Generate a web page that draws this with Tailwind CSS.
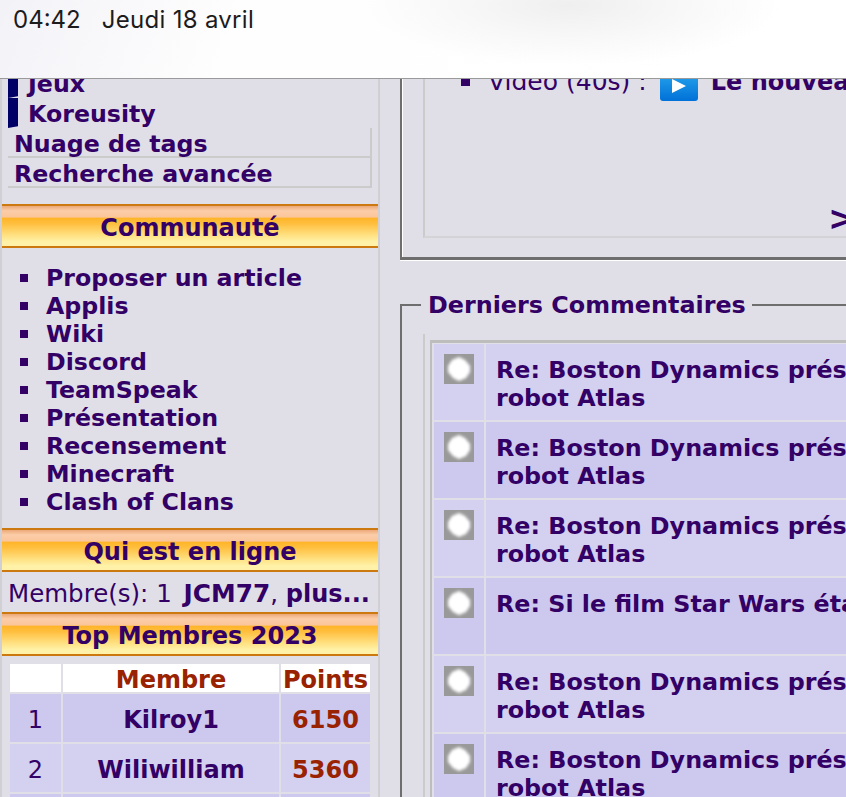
<!DOCTYPE html>
<html lang="fr">
<head>
<meta charset="utf-8">
<script src="https://cdn.jsdelivr.net/npm/@tailwindcss/browser@4"></script>
</head>
<body class="m-0">
<svg width="0" height="0" class="absolute"><defs><filter id="soft" x="-30%" y="-30%" width="160%" height="160%"><feGaussianBlur stdDeviation="1.6"/></filter>
<symbol id="dot" viewBox="0 0 30 30"><rect width="30" height="30" fill="#999"/><path d="M15 3L21 6L26 12L26 18L22 24L15 27L9 24L4 18L4 12L8 6Z" fill="#fff" filter="url(#soft)"/></symbol></defs></svg>
<div class="relative w-[846px] h-[797px] overflow-hidden bg-[#e0dfe8] text-[#330066] font-['DejaVu_Sans',sans-serif] text-[24px] leading-[28px] whitespace-nowrap">

  <div class="absolute z-10 top-0 left-0 w-full h-[79px] border-b border-[#9a9a9a] bg-[radial-gradient(ellipse_210px_60px_at_570px_5px,#efefef_0%,#f8f8f8_55%,#ffffff00_100%),linear-gradient(110deg,#f3f2f7_0%,#fefefe_28%,#ffffff_100%)] font-['Inter',sans-serif] text-[24px] leading-[28px] text-[#1c1c1e] flex gap-[21px] pl-[13px] pt-[6px]">
    <span>04:42</span><span class="tracking-[0.3px]">Jeudi 18 avril</span>
  </div>

  <div class="flex h-full">
    <aside class="w-[380px] shrink-0 h-full border-l-2 border-r-2 border-[#cfcfd4] pt-[68px] font-bold overflow-hidden">
      <div class="ml-[6px] flex h-[30px] leading-[32px] text-[23.7px]"><span class="w-[10px] h-[30px] bg-[#000066] [clip-path:polygon(0_0,100%_0,100%_94%,0_100%)]"></span><span class="ml-[10px]">Jeux</span></div>
      <div class="ml-[6px] flex h-[30px] leading-[32px] text-[23.7px]"><span class="w-[10px] h-[30px] bg-[#000066] [clip-path:polygon(0_0,100%_0,100%_94%,0_100%)]"></span><span class="ml-[10px]">Koreusity</span></div>
      <div class="ml-[6px] w-[364px] h-[30px] leading-[32px] text-[23.7px] pl-[6px] border-r-2 border-b-2 border-[#cbcbcb]">Nuage de tags</div>
      <div class="ml-[6px] w-[364px] h-[30px] leading-[32px] text-[23.7px] pl-[6px] border-r-2 border-b-2 border-[#cbcbcb]">Recherche avancée</div>

      <div class="mt-[16px] h-[44px] pt-[4px] flex items-center justify-center border-y-2 border-[#cc7a10] bg-[linear-gradient(#eda878_0%,#fbcda8_12%,#fac59a_28%,#ffb428_30%,#ffc040_45%,#ffe080_72%,#fff2a8_90%,#fff2a8_100%)]">Communauté</div>

      <ul class="mt-[16px] mb-[12px] text-[23.7px]">
        <li class="flex items-center h-[28px] pl-[18px] gap-[18px]"><span class="w-2 h-2 bg-[#330066]"></span>Proposer un article</li>
        <li class="flex items-center h-[28px] pl-[18px] gap-[18px]"><span class="w-2 h-2 bg-[#330066]"></span>Applis</li>
        <li class="flex items-center h-[28px] pl-[18px] gap-[18px]"><span class="w-2 h-2 bg-[#330066]"></span>Wiki</li>
        <li class="flex items-center h-[28px] pl-[18px] gap-[18px]"><span class="w-2 h-2 bg-[#330066]"></span>Discord</li>
        <li class="flex items-center h-[28px] pl-[18px] gap-[18px]"><span class="w-2 h-2 bg-[#330066]"></span>TeamSpeak</li>
        <li class="flex items-center h-[28px] pl-[18px] gap-[18px]"><span class="w-2 h-2 bg-[#330066]"></span>Présentation</li>
        <li class="flex items-center h-[28px] pl-[18px] gap-[18px]"><span class="w-2 h-2 bg-[#330066]"></span>Recensement</li>
        <li class="flex items-center h-[28px] pl-[18px] gap-[18px]"><span class="w-2 h-2 bg-[#330066]"></span>Minecraft</li>
        <li class="flex items-center h-[28px] pl-[18px] gap-[18px]"><span class="w-2 h-2 bg-[#330066]"></span>Clash of Clans</li>
      </ul>

      <div class="h-[44px] pt-[4px] flex items-center justify-center border-y-2 border-[#cc7a10] bg-[linear-gradient(#eda878_0%,#fbcda8_12%,#fac59a_28%,#ffb428_30%,#ffc040_45%,#ffe080_72%,#fff2a8_90%,#fff2a8_100%)]">Qui est en ligne</div>
      <div class="h-[40px] pt-[4px] pl-[6px] font-normal text-[24.5px] leading-[36px]">Membre(s):&nbsp;1&nbsp;<b class="ml-[4px] text-[24.8px]">JCM77</b>,&nbsp;<b class="text-[24px]">plus...</b></div>
      <div class="h-[44px] pt-[4px] flex items-center justify-center border-y-2 border-[#cc7a10] bg-[linear-gradient(#eda878_0%,#fbcda8_12%,#fac59a_28%,#ffb428_30%,#ffc040_45%,#ffe080_72%,#fff2a8_90%,#fff2a8_100%)]">Top Membres 2023</div>

      <div class="mt-[8px] ml-[8px] w-[360px] grid grid-cols-[51px_216px_89px] gap-[2px] text-center">
        <div class="h-[28px] bg-white"></div>
        <div class="h-[28px] leading-[32px] bg-white text-[#992200]">Membre</div>
        <div class="h-[28px] leading-[32px] bg-white text-[#992200]">Points</div>

        <div class="h-[48px] leading-[52px] bg-[#cdc8ee] font-normal">1</div>
        <div class="h-[48px] leading-[52px] bg-[#cdc8ee]">Kilroy1</div>
        <div class="h-[48px] leading-[52px] bg-[#cdc8ee] text-[#992200]">6150</div>

        <div class="h-[48px] leading-[52px] bg-[#d4d0f0] font-normal">2</div>
        <div class="h-[48px] leading-[52px] bg-[#d4d0f0]">Wiliwilliam</div>
        <div class="h-[48px] leading-[52px] bg-[#d4d0f0] text-[#992200]">5360</div>

        <div class="h-[48px] bg-[#cdc8ee]"></div>
        <div class="h-[48px] bg-[#cdc8ee]"></div>
        <div class="h-[48px] bg-[#cdc8ee]"></div>
      </div>
    </aside>

    <main class="ml-[20px] flex-1 min-w-0 h-full overflow-hidden">
      <section class="h-[260px] border-l-2 border-b-[3px] border-[#6e6e6e] pl-[21px] pb-[19px] shadow-[0_1px_0_#fff,inset_1px_0_0_#fff]">
        <div class="h-full border-l-2 border-b-2 border-l-[#cbcbcb] border-b-[#d4d4d6] pt-[68px]">
          <div class="flex items-center h-[28px]">
            <span class="ml-[36px] w-[9px] h-[8px] shrink-0 bg-[#330066]"></span>
            <span class="ml-[18px] text-[25px]">Vidéo (40s) :</span>
            <span class="ml-[13px] mt-[8px] w-[38px] h-[29px] shrink-0 rounded-[3px] bg-[linear-gradient(#27a4ec,#0071d8)] flex items-center justify-center">
              <svg width="16" height="16" viewBox="0 0 16 16"><path d="M1 1L15 8L1 15Z" fill="#fff"/></svg>
            </span>
            <b class="ml-[13px]">Le nouveau</b>
          </div>
          <div class="font-bold text-[34px] leading-[34px] mt-[105px] ml-[403px]">&gt;</div>
        </div>
      </section>

      <fieldset class="mt-[31px] ml-0 border-l-2 border-t-2 border-[#6e6e6e] pl-[21px] h-[600px] min-w-0">
        <legend class="ml-[-2px] pl-[7px] pr-[6px] font-bold text-[23.85px]">Derniers Commentaires</legend>
        <div class="mt-[15px] border-l-2 border-[#cbcbcb] pl-[5px] pt-[6px] h-full text-[23.8px]">
          <div class="border-l-2 border-t-[3px] border-[#bdbdbd] pt-[1px] pl-[2px] grid grid-cols-[50px_500px] gap-[2px] font-bold">
            <div class="h-[76px] bg-[#d4d0f0] pt-[10px] pl-[10px]"><svg class="w-[30px] h-[30px]"><use href="#dot"/></svg></div>
            <div class="h-[76px] bg-[#d4d0f0] pl-[10px] pt-[12px]">Re: Boston Dynamics présente le nouveau<br>robot Atlas</div>

            <div class="h-[76px] bg-[#cdc8ee] pt-[10px] pl-[10px]"><svg class="w-[30px] h-[30px]"><use href="#dot"/></svg></div>
            <div class="h-[76px] bg-[#cdc8ee] pl-[10px] pt-[12px]">Re: Boston Dynamics présente le nouveau<br>robot Atlas</div>

            <div class="h-[76px] bg-[#d4d0f0] pt-[10px] pl-[10px]"><svg class="w-[30px] h-[30px]"><use href="#dot"/></svg></div>
            <div class="h-[76px] bg-[#d4d0f0] pl-[10px] pt-[12px]">Re: Boston Dynamics présente le nouveau<br>robot Atlas</div>

            <div class="h-[76px] bg-[#cdc8ee] pt-[10px] pl-[10px]"><svg class="w-[30px] h-[30px]"><use href="#dot"/></svg></div>
            <div class="h-[76px] bg-[#cdc8ee] pl-[10px] pt-[12px]">Re: Si le film Star Wars était français</div>

            <div class="h-[76px] bg-[#d4d0f0] pt-[10px] pl-[10px]"><svg class="w-[30px] h-[30px]"><use href="#dot"/></svg></div>
            <div class="h-[76px] bg-[#d4d0f0] pl-[10px] pt-[12px]">Re: Boston Dynamics présente le nouveau<br>robot Atlas</div>

            <div class="h-[76px] bg-[#cdc8ee] pt-[10px] pl-[10px]"><svg class="w-[30px] h-[30px]"><use href="#dot"/></svg></div>
            <div class="h-[76px] bg-[#cdc8ee] pl-[10px] pt-[12px]">Re: Boston Dynamics présente le nouveau<br>robot Atlas</div>
          </div>
        </div>
      </fieldset>
    </main>
  </div>
</div>
</body>
</html>
